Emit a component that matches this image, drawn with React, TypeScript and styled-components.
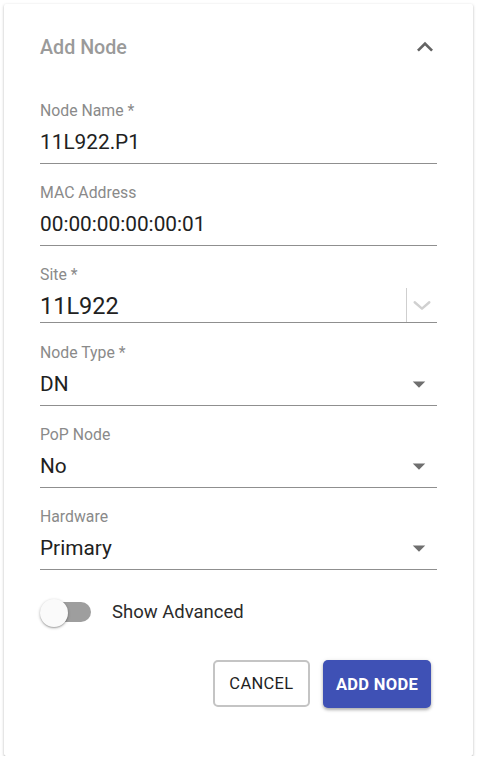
import React, { useState } from 'react';
import styled, { createGlobalStyle } from 'styled-components';

const GlobalStyle = createGlobalStyle`
  body {
    margin: 0;
    background: #fff;
    font-family: Roboto, "Liberation Sans", sans-serif;
  }
`;

const Card = styled.div`
  margin: 4px 0 0 4px;
  width: 469px;
  height: 752px;
  box-sizing: border-box;
  background: #fff;
  border-radius: 2px;
  box-shadow: 0 1px 3px rgba(0, 0, 0, 0.25), 0 1px 1px rgba(0, 0, 0, 0.14);
  padding: 0 36px;
  display: flex;
  flex-direction: column;
`;

const Header = styled.div`
  height: 86px;
  display: flex;
  align-items: center;
  justify-content: space-between;
`;

const Title = styled.span`
  font-size: 19.7px;
  font-weight: 500;
  color: #9a9a9a;
`;

const IconButton = styled.span`
  display: flex;
  width: 32px;
  height: 32px;
  margin-right: -4px;
  color: #636363;
`;

const Form = styled.div`
  padding-top: 12px;
  display: flex;
  flex-direction: column;
`;

const Field = styled.div<{ $tight?: boolean }>`
  display: flex;
  flex-direction: column;
  margin-bottom: ${(p) => (p.$tight ? 21 : 20)}px;
`;

const Label = styled.label`
  font-size: 15.8px;
  line-height: 18px;
  color: #8a8a8a;
`;

const InputRow = styled.div`
  display: flex;
  align-items: center;
  justify-content: space-between;
  margin-top: 8px;
  height: 28px;
  padding-bottom: 7px;
  border-bottom: 1.5px solid #8f8f8f;
`;

const Value = styled.span<{ $big?: boolean }>`
  font-size: ${(p) => (p.$big ? 23.5 : 20.8)}px;
  line-height: 28px;
  color: #212121;
`;

const SiteRow = styled.div`
  display: flex;
  align-items: stretch;
  margin-top: 4px;
  height: 34px;
  border-bottom: 1.5px solid #8f8f8f;
`;

const SiteValue = styled.div`
  flex: 1;
  display: flex;
  align-items: center;
  padding-top: 1px;
`;

const Separator = styled.span`
  width: 1px;
  background: #cfcfcf;
`;

const SiteIndicator = styled.span`
  width: 30px;
  display: flex;
  align-items: center;
  justify-content: center;
  color: #d0d0d0;
`;

const Arrow = styled.span`
  display: flex;
  margin-right: 3px;
  color: #6f6f6f;
`;

const SwitchRow = styled.div`
  display: flex;
  align-items: center;
  height: 44px;
`;

const SwitchBox = styled.span`
  position: relative;
  width: 56px;
  height: 30px;
  display: flex;
  align-items: center;
  cursor: pointer;
`;

const Track = styled.span<{ $on: boolean }>`
  margin-left: 14px;
  width: 37px;
  height: 20px;
  border-radius: 10px;
  background: ${(p) => (p.$on ? '#9fa8da' : '#9e9e9e')};
`;

const Thumb = styled.span<{ $on: boolean }>`
  position: absolute;
  top: 2px;
  left: ${(p) => (p.$on ? 28 : 0)}px;
  width: 28px;
  height: 28px;
  border-radius: 50%;
  background: ${(p) => (p.$on ? '#3f51b5' : '#fafafa')};
  box-shadow: 0 1px 3px rgba(0, 0, 0, 0.3), 0 1px 1px rgba(0, 0, 0, 0.14);
`;

const SwitchLabel = styled.span`
  margin-left: 16px;
  font-size: 18.5px;
  color: #2b2b2b;
`;

const Actions = styled.div`
  display: flex;
  justify-content: flex-end;
  gap: 13px;
  margin-top: 26px;
  padding-right: 6px;
`;

const Button = styled.button<{ $primary?: boolean }>`
  font-family: Roboto, "Liberation Sans", sans-serif;
  font-size: 16.5px;
  font-weight: ${(p) => (p.$primary ? 700 : 400)};
  letter-spacing: 0.3px;
  height: ${(p) => (p.$primary ? 48 : 47)}px;
  padding: 0 ${(p) => (p.$primary ? 13 : 14.5)}px;
  border-radius: 5px;
  border: ${(p) => (p.$primary ? 'none' : '2px solid #c4c4c4')};
  background: ${(p) => (p.$primary ? '#3f51b5' : '#fff')};
  color: ${(p) => (p.$primary ? '#fff' : '#1f1f1f')};
  box-shadow: ${(p) =>
    p.$primary ? '0 2px 3px rgba(0,0,0,0.25), 0 1px 5px rgba(0,0,0,0.12)' : 'none'};
  cursor: pointer;
`;

const DropArrow = () => (
  <svg width="30" height="30" viewBox="0 0 24 24" fill="currentColor">
    <path d="M7 10l5 5 5-5z" />
  </svg>
);

type FieldProps = { label: string; value: string; select?: boolean };

const TextField = ({ label, value, select }: FieldProps) => (
  <Field>
    <Label>{label}</Label>
    <InputRow>
      <Value>{value}</Value>
      {select && (
        <Arrow>
          <DropArrow />
        </Arrow>
      )}
    </InputRow>
  </Field>
);

export default function App() {
  const [advanced, setAdvanced] = useState(false);

  return (
    <>
      <GlobalStyle />
      <Card>
        <Header>
          <Title>Add Node</Title>
          <IconButton>
            <svg width="32" height="32" viewBox="0 0 24 24" fill="currentColor">
              <path d="M12 8l-6 6 1.41 1.41L12 10.83l4.59 4.58L18 14z" />
            </svg>
          </IconButton>
        </Header>
        <Form>
          <TextField label="Node Name *" value="11L922.P1" />
          <TextField label="MAC Address" value="00:00:00:00:00:01" />
          <Field $tight>
            <Label>Site *</Label>
            <SiteRow>
              <SiteValue>
                <Value $big>11L922</Value>
              </SiteValue>
              <Separator />
              <SiteIndicator>
                <svg width="22" height="22" viewBox="0 0 24 24" fill="none" stroke="currentColor" strokeWidth="2.6" strokeLinecap="round" strokeLinejoin="round">
                  <path d="M4 9l8 7 8-7" />
                </svg>
              </SiteIndicator>
            </SiteRow>
          </Field>
          <TextField label="Node Type *" value="DN" select />
          <TextField label="PoP Node" value="No" select />
          <TextField label="Hardware" value="Primary" select />
          <SwitchRow>
            <SwitchBox onClick={() => setAdvanced(!advanced)}>
              <Track $on={advanced} />
              <Thumb $on={advanced} />
            </SwitchBox>
            <SwitchLabel>Show Advanced</SwitchLabel>
          </SwitchRow>
          <Actions>
            <Button>CANCEL</Button>
            <Button $primary>ADD NODE</Button>
          </Actions>
        </Form>
      </Card>
    </>
  );
}
